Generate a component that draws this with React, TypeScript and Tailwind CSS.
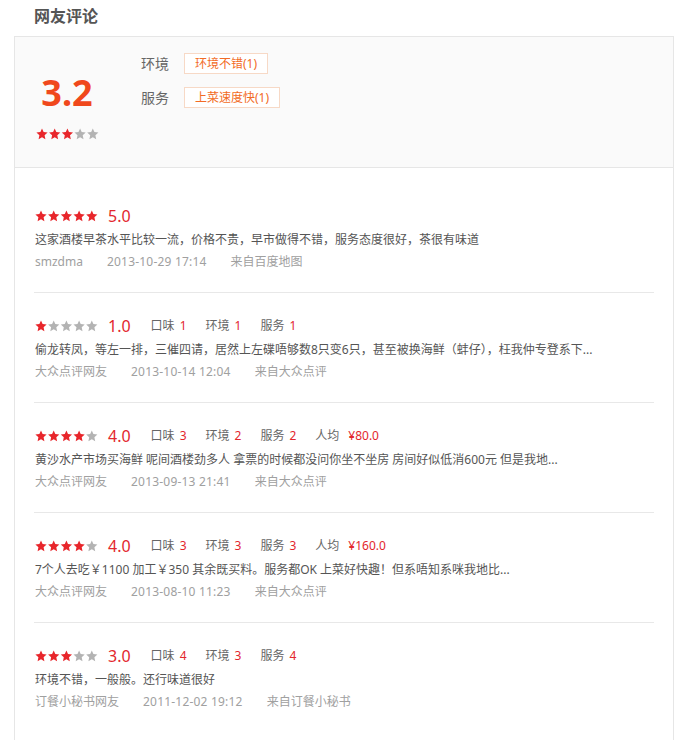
import React from "react";

type Review = {
  rating: number;
  sub?: { label: string; value: string }[];
  price?: string;
  text: string;
  user: string;
  time: string;
  source: string;
};

const reviews: Review[] = [
  {
    rating: 5,
    text: "这家酒楼早茶水平比较一流，价格不贵，早市做得不错，服务态度很好，茶很有味道",
    user: "smzdma",
    time: "2013-10-29 17:14",
    source: "来自百度地图",
  },
  {
    rating: 1,
    sub: [
      { label: "口味", value: "1" },
      { label: "环境", value: "1" },
      { label: "服务", value: "1" },
    ],
    text: "偷龙转凤，等左一排，三催四请，居然上左碟唔够数8只变6只，甚至被换海鲜（蚌仔），枉我仲专登系下...",
    user: "大众点评网友",
    time: "2013-10-14 12:04",
    source: "来自大众点评",
  },
  {
    rating: 4,
    sub: [
      { label: "口味", value: "3" },
      { label: "环境", value: "2" },
      { label: "服务", value: "2" },
    ],
    price: "¥80.0",
    text: "黄沙水产市场买海鲜 呢间酒楼劲多人 拿票的时候都没问你坐不坐房 房间好似低消600元 但是我地...",
    user: "大众点评网友",
    time: "2013-09-13 21:41",
    source: "来自大众点评",
  },
  {
    rating: 4,
    sub: [
      { label: "口味", value: "3" },
      { label: "环境", value: "3" },
      { label: "服务", value: "3" },
    ],
    price: "¥160.0",
    text: "7个人去吃￥1100 加工￥350 其余既买料。服务都OK 上菜好快趣！但系唔知系咪我地比...",
    user: "大众点评网友",
    time: "2013-08-10 11:23",
    source: "来自大众点评",
  },
  {
    rating: 3,
    sub: [
      { label: "口味", value: "4" },
      { label: "环境", value: "3" },
      { label: "服务", value: "4" },
    ],
    text: "环境不错，一般般。还行味道很好",
    user: "订餐小秘书网友",
    time: "2011-12-02 19:12",
    source: "来自订餐小秘书",
  },
];

const STAR = "6,0.4 7.6,4 11.6,4.5 8.6,7.2 9.4,11.3 6,9.3 2.6,11.3 3.4,7.2 0.4,4.5 4.4,4";

function Stars({ value }: { value: number }) {
  return (
    <svg width="64" height="12" viewBox="0 0 64 12" className="shrink-0">
      {[0, 1, 2, 3, 4].map((i) => (
        <polygon
          key={i}
          points={STAR}
          transform={`translate(${i * 12.7} 0)`}
          fill={i < value ? "#e8262b" : "#b3b3b3"}
        />
      ))}
    </svg>
  );
}

export default function App() {
  return (
    <div className="w-[688px] h-[740px] overflow-hidden bg-white font-['Noto_Sans','Noto_Sans_CJK_SC',sans-serif]">
      <h2 className="h-[36px] pl-[34px] pt-[5px] text-[16px] leading-[22px] font-bold text-[#555]">
        网友评论
      </h2>

      <div className="ml-[14px] w-[660px] border border-[#e6e6e6]">
        {/* summary */}
        <div className="flex h-[131px] bg-[#fafafa] border-b border-[#e6e6e6]">
          <div className="w-[104px] flex flex-col items-center pt-[36px]">
            <div className="text-[36px] leading-[40px] font-bold text-[#f0481c]">3.2</div>
            <div className="mt-[15px] pl-[1px]">
              <Stars value={3} />
            </div>
          </div>
          <div className="pl-[22px] pt-[16px] flex flex-col gap-[13px]">
            <div className="flex items-center gap-[15px]">
              <span className="text-[14px] text-[#666]">环境</span>
              <span className="h-[21px] px-[10px] flex items-center bg-white border border-[#f7d9c6] text-[12px] text-[#f26b25]">
                环境不错(1)
              </span>
            </div>
            <div className="flex items-center gap-[15px]">
              <span className="text-[14px] text-[#666]">服务</span>
              <span className="h-[21px] px-[10px] flex items-center bg-white border border-[#f7d9c6] text-[12px] text-[#f26b25]">
                上菜速度快(1)
              </span>
            </div>
          </div>
        </div>

        {/* list */}
        <div className="px-[19px] pt-[15px] pb-[30px]">
          {reviews.map((r, idx) => (
            <div
              key={idx}
              className="pt-[22px] pb-[21px] border-b border-[#e8e8e8] last:border-b-0 pl-[1px]"
            >
              <div className="h-[22px] flex items-center">
                <Stars value={r.rating} />
                <span className="ml-[9px] text-[16px] text-[#e3262d]">{r.rating}.0</span>
                {r.sub && (
                  <div className="ml-[20px] flex items-center gap-[19px] text-[12px]">
                    {r.sub.map((s) => (
                      <span key={s.label}>
                        <span className="text-[#666]">{s.label}</span>
                        <span className="ml-[5px] text-[#e3262d]">{s.value}</span>
                      </span>
                    ))}
                    {r.price && (
                      <span>
                        <span className="text-[#666]">人均</span>
                        <span className="ml-[9px] text-[#e3262d]">{r.price}</span>
                      </span>
                    )}
                  </div>
                )}
              </div>
              <div className="h-[22px] pt-[2px] leading-[22px] text-[12px] text-[#555] whitespace-nowrap">
                {r.text}
              </div>
              <div className="h-[22px] pt-[2px] leading-[22px] text-[12px] text-[#a0a0a0] flex">
                <span className="mr-[24px]">{r.user}</span>
                <span className="mr-[24px] tracking-[0.2px]">{r.time}</span>
                <span>{r.source}</span>
              </div>
            </div>
          ))}
        </div>
      </div>
    </div>
  );
}
